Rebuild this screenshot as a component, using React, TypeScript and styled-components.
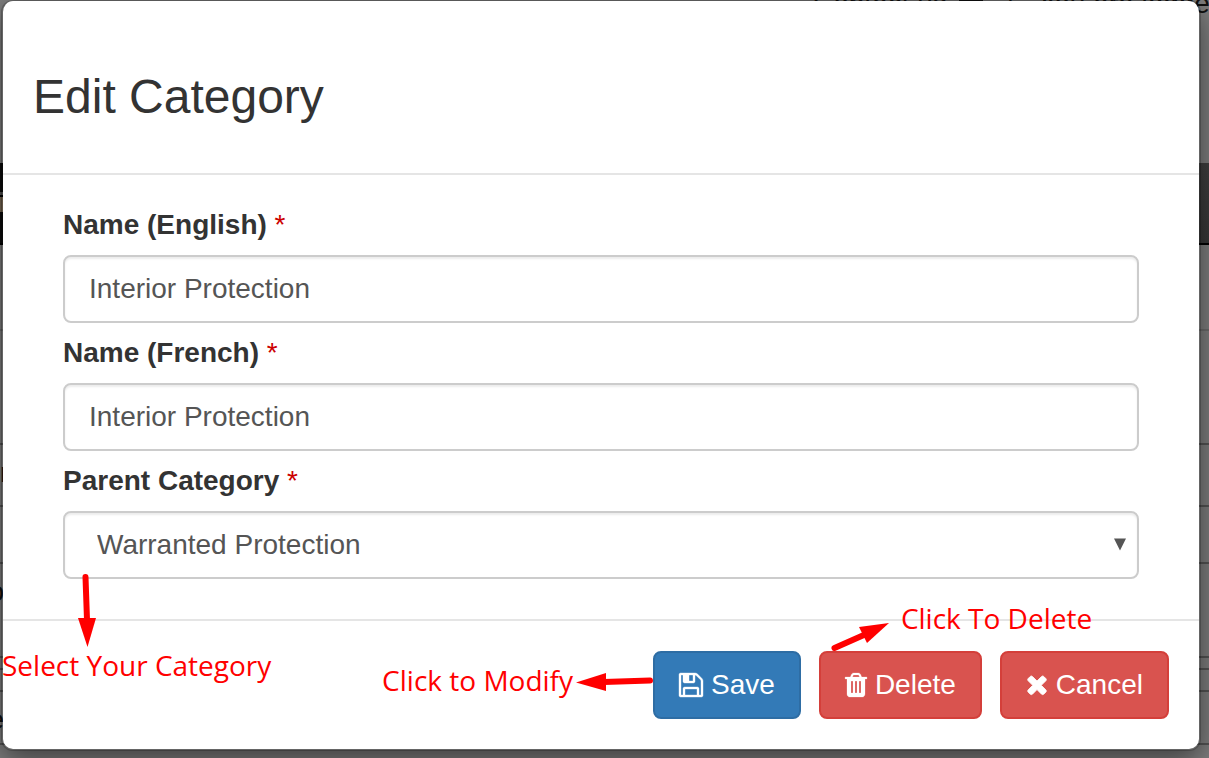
import React from "react";
import styled, { createGlobalStyle } from "styled-components";

const GlobalStyle = createGlobalStyle`
  *, *::before, *::after { box-sizing: border-box; }
  body {
    margin: 0;
    background: #7f7f7f;
    color: #333;
    font-family: "Liberation Sans", Arial, Helvetica, sans-serif;
    font-size: 28px;
    line-height: 40px;
  }
`;

const Screen = styled.div`
  position: relative;
  min-height: 100vh;
  overflow: hidden;
`;

/* Dimmed page behind the dialog */
const Page = styled.div`
  position: absolute;
  inset: 0;
  overflow: hidden;
  color: #111;
`;

const TopBar = styled.div`
  display: flex;
  align-items: flex-start;
  justify-content: flex-end;
  height: 163px;
`;

const TopLinks = styled.div`
  display: flex;
  gap: 24px;
  width: 396px;
  line-height: 8px;
  white-space: nowrap;

  > * {
    flex-shrink: 0;
  }
`;

const Flag = styled.span`
  width: 24px;
  height: 16px;
  margin-left: -12px;
  background: #111;
`;

const NavBar = styled.div`
  display: flex;
  justify-content: space-between;
  height: 82px;
  border-bottom: 2px solid #000;
  background: linear-gradient(#404040, #383838);
`;

const NavLogo = styled.div`
  width: 40px;
  border: solid #0c0c0c;
  border-width: 29px 0 31px;
  background: linear-gradient(#555 3px, #000 3px, #000 5px, #7a6a55 5px);
`;

const PageRow = styled.div<{ $height: number; $soft?: boolean }>`
  display: flex;
  align-items: flex-start;
  height: ${(p) => p.$height}px;
  padding-top: 8px;
  border-bottom: 2px solid ${(p) => (p.$soft ? "#6c6c6c" : "#555")};
`;

const RowText = styled.span<{ $bold?: boolean }>`
  display: flex;
  justify-content: ${(p) => (p.$bold ? "flex-start" : "flex-end")};
  width: 4px;
  font-weight: ${(p) => (p.$bold ? 700 : 400)};
`;

const Dialog = styled.section`
  position: relative;
  margin: 0 8px 9px 1px;
  border: 2px solid rgba(0, 0, 0, 0.2);
  border-top-width: 1px;
  border-radius: 12px;
  background: #fff;
  background-clip: padding-box;
  box-shadow: 0 10px 30px rgba(0, 0, 0, 0.5);
`;

const Header = styled.header`
  padding: 70px 30px 50px;
  border-bottom: 2px solid #e5e5e5;
`;

const Title = styled.h2`
  margin: 0;
  font-size: 48px;
  font-weight: 400;
  line-height: 52px;
`;

const Form = styled.div`
  display: grid;
  gap: 10px;
  padding: 30px 60px 40px;
`;

const Field = styled.div`
  display: grid;
  gap: 10px;
`;

const Label = styled.label`
  font-weight: 700;
`;

const Required = styled.span`
  color: #c00;
  font-weight: 400;
`;

const controlStyle = `
  width: 100%;
  height: 68px;
  border: 2px solid #ccc;
  border-radius: 8px;
  background: #fff;
  box-shadow: inset 0 2px 2px rgba(0, 0, 0, 0.075);
  color: #555;
  font: inherit;
  outline: none;
`;

const TextInput = styled.input`
  ${controlStyle}
  padding: 12px 24px;
`;

const SelectBox = styled.div`
  position: relative;
`;

const Select = styled.select`
  ${controlStyle}
  display: block;
  appearance: none;
  padding: 12px 32px;
`;

const Caret = styled.svg`
  position: absolute;
  top: 27px;
  right: 13px;
  pointer-events: none;
`;

const Footer = styled.footer`
  display: flex;
  justify-content: flex-end;
  gap: 18px;
  padding: 30px;
  border-top: 2px solid #e5e5e5;
`;

const Action = styled.div`
  position: relative;
`;

const Button = styled.button<{ $kind: "primary" | "danger" }>`
  display: flex;
  align-items: center;
  gap: 8px;
  padding: 12px 24px;
  border: 2px solid ${(p) => (p.$kind === "primary" ? "#2e6da4" : "#d43f3a")};
  border-radius: 8px;
  background: ${(p) => (p.$kind === "primary" ? "#337ab7" : "#d9534f")};
  color: #fff;
  font: inherit;
  cursor: pointer;
`;

/* Red call-outs drawn over the dialog */
const Note = styled.span`
  color: #f00;
  font-family: "Open Sans", sans-serif;
  font-size: 28px;
  line-height: 34px;
  white-space: nowrap;
`;

const SelectNote = styled.div`
  position: absolute;
  top: 64px;
  left: -61px;
  z-index: 1;
  display: grid;
  pointer-events: none;
`;

const SelectArrow = styled.svg`
  margin-left: 75px;
`;

const SaveNote = styled.div`
  position: absolute;
  top: 12px;
  right: 100%;
  display: flex;
  align-items: flex-start;
  gap: 2px;
  pointer-events: none;

  svg {
    margin-top: 8px;
  }
`;

const DeleteNote = styled.div`
  position: absolute;
  bottom: 66px;
  left: 12px;
  z-index: 1;
  display: flex;
  align-items: flex-end;
  gap: 10px;
  pointer-events: none;

  ${Note} {
    padding-bottom: 18px;
  }
`;

const icons = {
  save: {
    width: 24,
    viewBox: "0 128 1536 1536",
    weight: 24,
    d: "M384 1536h768v-384h-768v384zM1280 1536h128v-896q0-14-10-38.5t-20-34.5l-281-281q-10-10-34-20t-39-10v416q0 40-28 68t-68 28h-576q-40 0-68-28t-28-68v-416h-128v1280h128v-416q0-40 28-68t68-28h832q40 0 68 28t28 68v416zM896 608v-320q0-13-9.5-22.5t-22.5-9.5h-192q-13 0-22.5 9.5t-9.5 22.5v320q0 13 9.5 22.5t22.5 9.5h192q13 0 22.5-9.5t9.5-22.5zM1536 640v928q0 40-28 68t-68 28h-1344q-40 0-68-28t-28-68v-1344q0-40 28-68t68-28h928q40 0 88 20t76 48l280 280q28 28 48 76t20 88z",
  },
  trash: {
    width: 22,
    viewBox: "192 128 1408 1536",
    weight: 16,
    d: "M704 1376v-704q0-14-9-23t-23-9h-64q-14 0-23 9t-9 23v704q0 14 9 23t23 9h64q14 0 23-9t9-23zm256 0v-704q0-14-9-23t-23-9h-64q-14 0-23 9t-9 23v704q0 14 9 23t23 9h64q14 0 23-9t9-23zm256 0v-704q0-14-9-23t-23-9h-64q-14 0-23 9t-9 23v704q0 14 9 23t23 9h64q14 0 23-9t9-23zm-544-992h448l-48-117q-7-9-17-11h-317q-10 2-17 11zm928 32v64q0 14-9 23t-23 9h-96v948q0 83-47 143.5t-113 60.5h-832q-66 0-113-58.5t-47-141.5v-952h-96q-14 0-23-9t-9-23v-64q0-14 9-23t23-9h309l70-167q15-37 54-63t79-26h320q40 0 79 26t54 63l70 167h309q14 0 23 9t9 23z",
  },
  times: {
    width: 22,
    viewBox: "192 172 1408 1536",
    weight: 56,
    d: "M1490 1322q0 40-28 68l-136 136q-28 28-68 28t-68-28l-294-294-294 294q-28 28-68 28t-68-28l-136-136q-28-28-28-68t28-68l294-294-294-294q-28-28-28-68t28-68l136-136q28-28 68-28t68 28l294 294 294-294q28-28 68-28t68 28l136 136q28 28 28 68t-28 68l-294 294 294 294q28 28 28 68z",
  },
};

function Icon({ name }: { name: keyof typeof icons }) {
  const icon = icons[name];
  return (
    <svg
      width={icon.width}
      height={24}
      viewBox={icon.viewBox}
      fill="currentColor"
      stroke="currentColor"
      strokeWidth={icon.weight}
      overflow="visible"
      aria-hidden="true"
    >
      <path d={icon.d} />
    </svg>
  );
}

const rows = [
  { height: 86, soft: true },
  { height: 114 },
  { height: 62, text: "r", bold: true },
  { height: 57 },
  { height: 94, text: "o" },
  { height: 12 },
  { height: 22 },
  { height: 53, text: "e" },
];

export default function App() {
  return (
    <Screen>
      <GlobalStyle />
      <Page aria-hidden="true">
        <TopBar>
          <TopLinks>
            <span>Contact us</span>
            <Flag />
            <span>|</span>
            <span>You are logged</span>
          </TopLinks>
        </TopBar>
        <NavBar>
          <NavLogo />
        </NavBar>
        {rows.map((row, i) => (
          <PageRow key={i} $height={row.height} $soft={row.soft}>
            {row.text && <RowText $bold={row.bold}>{row.text}</RowText>}
          </PageRow>
        ))}
      </Page>

      <Dialog role="dialog" aria-labelledby="dialog-title">
        <Header>
          <Title id="dialog-title">Edit Category</Title>
        </Header>
        <Form>
          <Field>
            <Label htmlFor="name-en">
              Name (English) <Required>*</Required>
            </Label>
            <TextInput id="name-en" defaultValue="Interior Protection" />
          </Field>
          <Field>
            <Label htmlFor="name-fr">
              Name (French) <Required>*</Required>
            </Label>
            <TextInput id="name-fr" defaultValue="Interior Protection" />
          </Field>
          <Field>
            <Label htmlFor="parent">
              Parent Category <Required>*</Required>
            </Label>
            <SelectBox>
              <Select id="parent" defaultValue="warranted">
                <option value="warranted">Warranted Protection</option>
              </Select>
              <Caret width="12" height="13" viewBox="0 0 12 13" fill="#555" aria-hidden="true">
                <path d="M0 0.5H12L6 12.5Z" />
              </Caret>
              <SelectNote>
                <SelectArrow width="20" height="73" viewBox="77 575 20 73" fill="#f00" overflow="visible" aria-hidden="true">
                  <path d="M85.5 577L87 620" stroke="#f00" strokeWidth="6" strokeLinecap="round" />
                  <path d="M78 618H96L87.5 647Z" />
                </SelectArrow>
                <Note>Select Your Category</Note>
              </SelectNote>
            </SelectBox>
          </Field>
        </Form>
        <Footer>
          <Action>
            <SaveNote>
              <Note>Click to Modify</Note>
              <svg width="78" height="22" viewBox="576 671 78 22" fill="#f00" aria-hidden="true">
                <path d="M651 680.5L605 682" stroke="#f00" strokeWidth="6" strokeLinecap="round" />
                <path d="M577 682.5L607 673V691Z" />
              </svg>
            </SaveNote>
            <Button type="button" $kind="primary">
              <Icon name="save" />
              Save
            </Button>
          </Action>
          <Action>
            <DeleteNote>
              <svg width="60" height="34" viewBox="830 619 60 34" fill="#f00" aria-hidden="true">
                <path d="M833.5 648L864 634.5" stroke="#f00" strokeWidth="6" strokeLinecap="round" />
                <path d="M888 623L858 627L866 643Z" />
              </svg>
              <Note>Click To Delete</Note>
            </DeleteNote>
            <Button type="button" $kind="danger">
              <Icon name="trash" />
              Delete
            </Button>
          </Action>
          <Action>
            <Button type="button" $kind="danger">
              <Icon name="times" />
              Cancel
            </Button>
          </Action>
        </Footer>
      </Dialog>
    </Screen>
  );
}
